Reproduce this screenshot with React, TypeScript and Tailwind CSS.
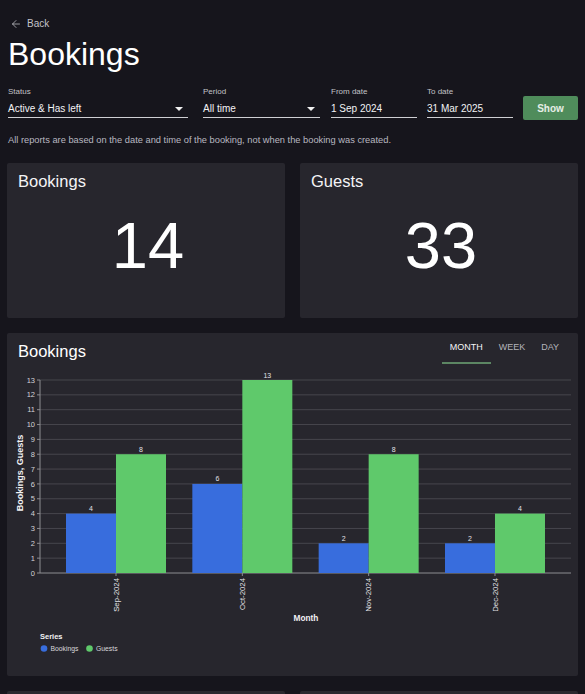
import { ArrowLeft } from 'lucide-react'

// ─── Report data ───────────────────────────────────────────────────────────
const MONTHS = [
  { label: 'Sep-2024', bookings: 4, guests: 8 },
  { label: 'Oct-2024', bookings: 6, guests: 13 },
  { label: 'Nov-2024', bookings: 2, guests: 8 },
  { label: 'Dec-2024', bookings: 2, guests: 4 },
]

const BLUE = '#386ddd'
const GREEN = '#5fc96b'

// chart geometry, in page coordinates (the svg viewBox starts at the card's origin)
const PLOT_LEFT = 40
const PLOT_RIGHT = 571
const BASE_Y = 573
const UNIT = 193 / 13
const STEP = 126.33
const FIRST_CENTER = 116
const BAR_W = 50

const yOf = (v: number) => BASE_Y - v * UNIT

export default function App() {
  return (
    <main className="min-h-screen w-full bg-[#16151c] px-[7px] font-['Liberation_Sans',Arial,sans-serif] text-white">
      {/* Back link */}
      <div className="flex items-center gap-[5px] pl-[3px] pt-[18px] text-[10px] leading-[12px] text-[#c4c4c9]">
        <ArrowLeft size={12} strokeWidth={1.5} />
        <span>Back</span>
      </div>

      <h1 className="mt-[6px] pl-[1px] text-[32px] leading-[36px] text-white">Bookings</h1>

      {/* Filters */}
      <div className="mt-[16px] flex items-start pl-[1px]">
        <Field label="Status" value="Active & Has left" width="w-[180px]" select />
        <Field label="Period" value="All time" width="w-[117px] ml-[15px]" select />
        <Field label="From date" value="1 Sep 2024" width="w-[86px] ml-[11px]" />
        <Field label="To date" value="31 Mar 2025" width="w-[86px] ml-[10px]" />
        <button className="ml-[10px] mt-[8px] flex h-[24px] w-[55px] items-center justify-center rounded-[2px] bg-[#4f8c5b] text-[10px] font-bold text-[#e6eee6]">
          Show
        </button>
      </div>

      <p className="mt-[14px] pl-[1px] text-[9.3px] leading-[12px] text-[#b8b8c0]">
        All reports are based on the date and time of the booking, not when the booking was created.
      </p>

      {/* Totals */}
      <div className="mt-[17px] grid grid-cols-2 gap-[15px]">
        <StatCard title="Bookings" value={14} />
        <StatCard title="Guests" value={33} />
      </div>

      {/* Chart */}
      <section className="mt-[15px] h-[343px] rounded-[2px] bg-[#27262d]">
        <div className="flex h-[35px] items-start justify-between">
          <h2 className="pl-[11px] pt-[8px] text-[16.5px] leading-[20px] text-white">Bookings</h2>
          <div className="flex pr-[11px] pt-[1px]">
            <Tab label="MONTH" active />
            <Tab label="WEEK" />
            <Tab label="DAY" />
          </div>
        </div>
        <BookingsChart />
      </section>

      {/* Next row of reports */}
      <div className="mt-[15px] grid grid-cols-2 gap-[15px]">
        <div className="h-[120px] rounded-[2px] bg-[#2a292f]" />
        <div className="h-[120px] rounded-[2px] bg-[#2a292f]" />
      </div>
    </main>
  )
}

// ─── Filter field ──────────────────────────────────────────────────────────

function Field({
  label,
  value,
  width,
  select,
}: {
  label: string
  value: string
  width: string
  select?: boolean
}) {
  return (
    <div className={`flex flex-col ${width}`}>
      <span className="text-[8px] leading-[8px] text-[#c2c2c7]">{label}</span>
      <div className="mt-[7px] flex items-center justify-between border-b border-[#cfcfd3] pb-[2px]">
        <span className="text-[10px] leading-[12px] text-[#f2f2f4]">{value}</span>
        {select && (
          <span className="mr-[5px] h-0 w-0 border-x-[4px] border-t-[4px] border-x-transparent border-t-[#f0f0f0]" />
        )}
      </div>
    </div>
  )
}

// ─── Total card ────────────────────────────────────────────────────────────

function StatCard({ title, value }: { title: string; value: number }) {
  return (
    <div className="flex h-[155px] flex-col rounded-[2px] bg-[#27262d]">
      <span className="pl-[11px] pt-[8px] text-[16.5px] leading-[20px] text-[#f4f4f6]">{title}</span>
      <span className="mt-[22px] pl-[4px] text-center text-[65px] leading-[66px] text-white">{value}</span>
    </div>
  )
}

function Tab({ label, active }: { label: string; active?: boolean }) {
  return (
    <div
      className={`flex h-[30px] items-center border-b-2 px-[8px] text-[9px] ${
        active ? 'border-[#5c8663] text-[#f4f4f6]' : 'border-transparent text-[#b4b4ba]'
      }`}
    >
      {label}
    </div>
  )
}

// ─── Grouped bar chart ─────────────────────────────────────────────────────

function BookingsChart() {
  const ticks = Array.from({ length: 14 }, (_, i) => i)
  return (
    <svg width={571} height={308} viewBox="7 368 571 308" className="block">
      {/* grid + y axis */}
      {ticks.map((t) => (
        <g key={t}>
          <line
            x1={PLOT_LEFT}
            x2={PLOT_RIGHT}
            y1={yOf(t)}
            y2={yOf(t)}
            stroke={t === 0 ? '#8d8d92' : '#47464d'}
            strokeWidth={1}
          />
          <line x1={37} x2={PLOT_LEFT} y1={yOf(t)} y2={yOf(t)} stroke="#8d8d92" />
          <text
            x={35}
            y={yOf(t)}
            dy="0.35em"
            textAnchor="end"
            fontSize={7.5}
            fill="#d4d4d8"
            fontFamily="Liberation Sans, Arial, sans-serif"
          >
            {t}
          </text>
        </g>
      ))}
      <line x1={PLOT_LEFT} x2={PLOT_LEFT} y1={yOf(13)} y2={BASE_Y} stroke="#8d8d92" />

      {/* bars */}
      {MONTHS.map((m, i) => {
        const cx = FIRST_CENTER + i * STEP
        return (
          <g key={m.label} fontFamily="Liberation Sans, Arial, sans-serif">
            <rect x={cx - BAR_W} y={yOf(m.bookings)} width={BAR_W} height={m.bookings * UNIT} fill={BLUE} />
            <rect x={cx} y={yOf(m.guests)} width={BAR_W} height={m.guests * UNIT} fill={GREEN} />
            <text x={cx - BAR_W / 2} y={yOf(m.bookings) - 2.5} textAnchor="middle" fontSize={7} fill="#e2e2e6">
              {m.bookings}
            </text>
            <text x={cx + BAR_W / 2} y={yOf(m.guests) - 2.5} textAnchor="middle" fontSize={7} fill="#e2e2e6">
              {m.guests}
            </text>
            <line x1={cx} x2={cx} y1={BASE_Y} y2={BASE_Y + 3} stroke="#8d8d92" />
            <g transform={`translate(${cx} ${BASE_Y + 5}) rotate(-90)`}>
              <text x={0} y={0} dy="0.35em" textAnchor="end" fontSize={7.8} fill="#e2e2e6">
                {m.label}
              </text>
            </g>
          </g>
        )
      })}

      {/* axis titles */}
      <g fontFamily="Liberation Sans, Arial, sans-serif" fontWeight="bold" fill="#f2f2f4">
        <g transform="translate(20 473) rotate(-90)">
          <text x={0} y={0} dy="0.35em" textAnchor="middle" fontSize={9}>
            Bookings, Guests
          </text>
        </g>
        <text x={306} y={621} textAnchor="middle" fontSize={8.3}>
          Month
        </text>
        <text x={40} y={639} fontSize={7.5}>
          Series
        </text>
      </g>

      {/* legend */}
      <g fontFamily="Liberation Sans, Arial, sans-serif" fontSize={6.8} fill="#d8d8dc">
        <circle cx={44} cy={648.5} r={3.3} fill={BLUE} />
        <text x={50.5} y={651}>
          Bookings
        </text>
        <circle cx={89.5} cy={648.5} r={3.3} fill={GREEN} />
        <text x={96} y={651}>
          Guests
        </text>
      </g>
    </svg>
  )
}
